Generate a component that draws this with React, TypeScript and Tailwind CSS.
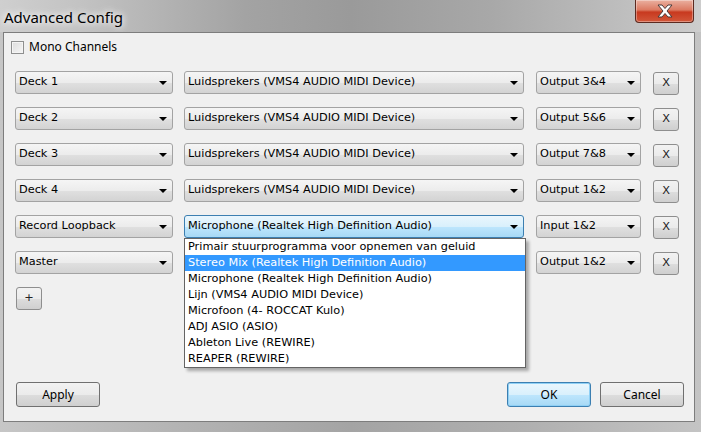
import React from "react";

const uiFont = "font-['Noto_Sans','Open_Sans',sans-serif]";
const comboFont = "font-['DejaVu_Sans',sans-serif] text-[11.3px]";

const devices = [
  "Primair stuurprogramma voor opnemen van geluid",
  "Stereo Mix (Realtek High Definition Audio)",
  "Microphone (Realtek High Definition Audio)",
  "Lijn (VMS4 AUDIO MIDI Device)",
  "Microfoon (4- ROCCAT Kulo)",
  "ADJ ASIO (ASIO)",
  "Ableton Live (REWIRE)",
  "REAPER (REWIRE)",
];

// the Master row's device combo sits under the open list, so it shows no text
const rows = [
  { source: "Deck 1", device: "Luidsprekers (VMS4 AUDIO MIDI Device)", channel: "Output 3&4" },
  { source: "Deck 2", device: "Luidsprekers (VMS4 AUDIO MIDI Device)", channel: "Output 5&6" },
  { source: "Deck 3", device: "Luidsprekers (VMS4 AUDIO MIDI Device)", channel: "Output 7&8" },
  { source: "Deck 4", device: "Luidsprekers (VMS4 AUDIO MIDI Device)", channel: "Output 1&2" },
  { source: "Record Loopback", device: "Microphone (Realtek High Definition Audio)", channel: "Input 1&2", open: true },
  { source: "Master", device: "", channel: "Output 1&2" },
];

function Arrow() {
  return (
    <svg width="8" height="4" viewBox="0 0 8 4" className="shrink-0">
      <path d="M0 0h8L4 4z" fill="#000" />
    </svg>
  );
}

function Combo({ label, width, focused }: { label: string; width: string; focused?: boolean }) {
  return (
    <div
      className={`${width} h-[23px] shrink-0 flex items-center justify-between rounded-[3px] border pl-[3px] pr-[5px] ${comboFont} text-black ${
        focused
          ? "border-[#3c7fb1] bg-[linear-gradient(#eaf6fd_0%,#d9f0fc_50%,#bee6fd_51%,#a7d9f5_100%)]"
          : "border-[#a3a3a3] bg-[linear-gradient(#f5f5f5_0%,#ececec_50%,#e0e0e0_51%,#d3d3d3_100%)]"
      }`}
    >
      <span className="whitespace-nowrap">{label}</span>
      <Arrow />
    </div>
  );
}

function SmallButton({ label }: { label: string }) {
  return (
    <div
      className={`w-[26px] h-[23px] shrink-0 flex items-center justify-center rounded-[3px] border border-[#8e8e8e] bg-[linear-gradient(#f2f2f2_0%,#ebebeb_50%,#dddddd_51%,#cfcfcf_100%)] ${comboFont} text-[#222]`}
    >
      {label}
    </div>
  );
}

function Button({ label, primary }: { label: string; primary?: boolean }) {
  return (
    <div
      className={`w-[84px] h-[25px] flex items-center justify-center rounded-[3px] border text-[12px] text-black ${uiFont} ${
        primary
          ? "border-[#3c7fb1] bg-[linear-gradient(#eaf6fd_0%,#d9f0fc_50%,#bee6fd_51%,#a7d9f5_100%)] shadow-[inset_0_0_0_1px_#8fd0f5]"
          : "border-[#707070] bg-[linear-gradient(#f2f2f2_0%,#ebebeb_50%,#dddddd_51%,#cfcfcf_100%)]"
      }`}
    >
      {label}
    </div>
  );
}

function DropList() {
  return (
    <div className="absolute left-0 top-[23px] z-10 w-[342px] border border-[#646464] bg-white shadow-[3px_3px_3px_rgba(0,0,0,0.3)]">
      {devices.map((d, i) => (
        <div
          key={d}
          className={`h-[16px] pl-[3px] leading-[16px] whitespace-nowrap ${comboFont} ${
            i === 1 ? "bg-[#3399ff] text-white" : "text-black"
          }`}
        >
          {d}
        </div>
      ))}
    </div>
  );
}

function CloseIcon() {
  return (
    <svg width="20" height="14" viewBox="0 0 20 14">
      <path
        d="M3 1h4l3 3.5L13 1h4l-5 6 5 6h-4l-3-3.5L7 13H3l5-6z"
        fill="#fff"
        stroke="#4a3a3a"
        strokeWidth="1"
        strokeLinejoin="round"
      />
    </svg>
  );
}

export default function App() {
  return (
    <div className="w-[701px] h-[432px] flex flex-col bg-[linear-gradient(90deg,#c6c6c6_0%,#b4b4b4_25%,#a4a4a4_50%,#b0b0b0_75%,#c4c4c4_100%)] overflow-hidden">
      <div className="h-[32px] flex items-start justify-between bg-[linear-gradient(90deg,#cfcfcf_0%,#c2c2c2_12%,#a3a3a3_35%,#9a9a9a_50%,#a8a8a8_70%,#bdbdbd_88%,#cdcdcd_100%)]">
        <div
          className={`pl-[4px] pt-[6px] text-[15px] text-black ${uiFont} [text-shadow:0_0_6px_#fff,0_0_10px_#fff]`}
        >
          Advanced Config
        </div>
        <div className="mr-[7px] w-[59px] h-[23px] flex items-center justify-center rounded-b-[4px] border border-t-0 border-[#5c2a20] bg-[linear-gradient(#eab0a0_0%,#dc7a62_45%,#c8391f_55%,#d2573a_100%)] shadow-[inset_0_0_0_1px_rgba(255,255,255,0.35)]">
          <CloseIcon />
        </div>
      </div>

      <div className="ml-[3px] mr-[6px] mb-[10px] flex-1 flex flex-col border border-[#7d7d7d] bg-[#f0f0f0] pl-[11px] pr-[10px] pt-[6px] pb-[14px]">
        <div className="h-[16px] flex items-center gap-[5px] -ml-[4px]">
          <div className="w-[13px] h-[13px] border border-[#8e8f8f] bg-[linear-gradient(135deg,#dcdcdc,#f6f6f6)] shadow-[inset_0_0_0_1px_#f4f4f4]" />
          <span className={`text-[12px] leading-[16px] text-black ${uiFont}`}>Mono Channels</span>
        </div>

        <div className="mt-[16px] flex flex-col gap-[13px]">
          {rows.map((r) => (
            <div key={r.source} className="h-[23px] flex items-start">
              <Combo label={r.source} width="w-[158px]" />
              <div className="relative ml-[11px]">
                <Combo label={r.device} width="w-[340px]" focused={r.open} />
                {r.open && <DropList />}
              </div>
              <div className="ml-[12px]">
                <Combo label={r.channel} width="w-[105px]" />
              </div>
              <div className="ml-[12px] mt-[1px]">
                <SmallButton label="X" />
              </div>
            </div>
          ))}
        </div>

        <div className="mt-[13px] ml-[1px]">
          <SmallButton label="+" />
        </div>

        <div className="mt-auto flex items-center ml-[1px]">
          <Button label="Apply" />
          <div className="ml-auto flex gap-[9px]">
            <Button label="OK" primary />
            <Button label="Cancel" />
          </div>
        </div>
      </div>
    </div>
  );
}
